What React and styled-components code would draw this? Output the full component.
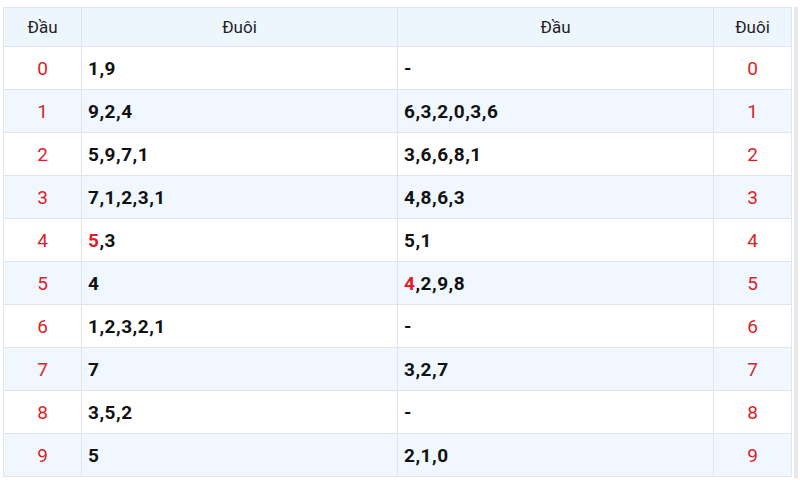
import React from "react";
import styled, { createGlobalStyle } from "styled-components";

const Global = createGlobalStyle`
  html, body { margin: 0; padding: 0; background: #fff; }
  body { font-family: Roboto, "Liberation Sans", sans-serif; }
`;

const Page = styled.div`
  display: flex;
  align-items: flex-start;
  padding: 7px 0 0 3px;
  gap: 2px;
`;

const Table = styled.table`
  border-collapse: collapse;
  table-layout: fixed;
  width: 788px;
  border: 1px solid #dfe5ec;
`;

const Side = styled.div`
  width: 4px;
  height: 471px;
  background: #e6e8eb;
`;

const Th = styled.th`
  height: 38px;
  padding: 0;
  font-weight: 400;
  font-size: 17px;
  color: #1e1e1e;
  background: #edf5fd;
  border: 1px solid #dfe5ec;
  text-align: center;
`;

const Row = styled.tr`
  background: ${(p) => (p.$alt ? "#f0f7fe" : "#ffffff")};
`;

const Num = styled.td`
  height: 42px;
  padding: 0;
  text-align: center;
  color: #dc1f26;
  font-size: 19px;
  border: 1px solid #dfe5ec;
`;

const Val = styled.td`
  height: 42px;
  padding: 0 0 0 6px;
  font-weight: 700;
  font-size: 19px;
  letter-spacing: 0.5px;
  color: #111;
  border: 1px solid #dfe5ec;
`;

const Hot = styled.span`
  color: #dc1f26;
`;

const rows = [
  ["1,9", "-"],
  ["9,2,4", "6,3,2,0,3,6"],
  ["5,9,7,1", "3,6,6,8,1"],
  ["7,1,2,3,1", "4,8,6,3"],
  [[<Hot key="h">5</Hot>, ",3"], "5,1"],
  ["4", [<Hot key="h">4</Hot>, ",2,9,8"]],
  ["1,2,3,2,1", "-"],
  ["7", "3,2,7"],
  ["3,5,2", "-"],
  ["5", "2,1,0"],
];

export default function App() {
  return (
    <>
      <Global />
      <Page>
        <Table>
          <colgroup>
            <col style={{ width: 78 }} />
            <col style={{ width: 316 }} />
            <col style={{ width: 316 }} />
            <col style={{ width: 78 }} />
          </colgroup>
          <thead>
            <tr>
              <Th>Đầu</Th>
              <Th>Đuôi</Th>
              <Th>Đầu</Th>
              <Th>Đuôi</Th>
            </tr>
          </thead>
          <tbody>
            {rows.map((r, i) => (
              <Row key={i} $alt={i % 2 === 1}>
                <Num>{i}</Num>
                <Val>{r[0]}</Val>
                <Val>{r[1]}</Val>
                <Num>{i}</Num>
              </Row>
            ))}
          </tbody>
        </Table>
        <Side />
      </Page>
    </>
  );
}
